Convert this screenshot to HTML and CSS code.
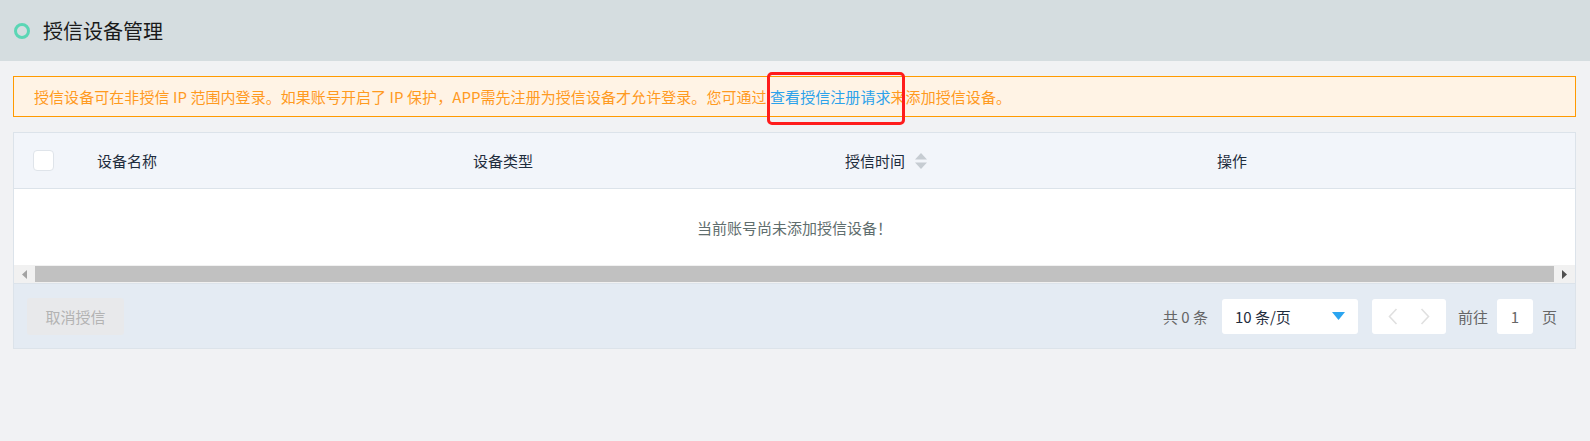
FILE: index.html
```html
<!DOCTYPE html>
<html lang="zh-CN">
<head>
<meta charset="utf-8">
<title>授信设备管理</title>
<link rel="stylesheet" href="styles.css">
</head>
<body>
<header class="page-head">
  <span class="head-dot"></span>
  <h1 class="head-title">授信设备管理</h1>
</header>
<main class="content">
  <div class="alert">
    <span>授信设备可在非授信 IP 范围内登录。如果账号开启了 IP 保护，APP需先注册为授信设备才允许登录。您可通过 <a class="alert-link">查看授信注册请求</a>来添加授信设备。</span>
    <span class="mark-box"></span>
  </div>

  <section class="table">
    <div class="thead">
      <div class="cell cell-check"><span class="checkbox"></span></div>
      <div class="cell">设备名称</div>
      <div class="cell">设备类型</div>
      <div class="cell">授信时间
        <svg class="sort" width="12" height="16" viewBox="0 0 12 16"><path d="M6 0 L12 6.5 L0 6.5 Z" fill="#c6ccd2"/><path d="M6 16 L12 9.5 L0 9.5 Z" fill="#c6ccd2"/></svg>
      </div>
      <div class="cell">操作</div>
    </div>
    <div class="tbody">当前账号尚未添加授信设备！</div>
    <div class="hscroll">
      <span class="hs-btn"><svg width="5" height="9" viewBox="0 0 5 9"><path d="M5 0 L0 4.5 L5 9 Z" fill="#a3a3a3"/></svg></span>
      <span class="hs-thumb"></span>
      <span class="hs-btn"><svg width="5" height="9" viewBox="0 0 5 9"><path d="M0 0 L5 4.5 L0 9 Z" fill="#505050"/></svg></span>
    </div>
    <div class="tfoot">
      <button class="btn-disabled" disabled>取消授信</button>
      <div class="pager">
        <span class="total">共 0 条</span>
        <div class="select">
          <span>10 条/页</span>
          <svg width="13" height="8" viewBox="0 0 13 8"><path d="M0 0 L13 0 L6.5 8 Z" fill="#2ba5f0"/></svg>
        </div>
        <div class="nav">
          <svg width="10" height="17" viewBox="0 0 10 17"><path d="M8.5 1 L1.5 8.5 L8.5 16" fill="none" stroke="#e0e0e0" stroke-width="1.6"/></svg>
          <svg width="10" height="17" viewBox="0 0 10 17"><path d="M1.5 1 L8.5 8.5 L1.5 16" fill="none" stroke="#e0e0e0" stroke-width="1.6"/></svg>
        </div>
        <span class="goto">前往</span>
        <span class="page-input">1</span>
        <span class="goto">页</span>
      </div>
    </div>
  </section>
</main>
</body>
</html>
```

FILE: styles.css
```css
* { box-sizing: border-box; }
html, body { margin: 0; padding: 0; }
body {
  background: #f1f2f4;
  font-family: "Noto Sans CJK SC", "Noto Sans", sans-serif;
  color: #1f2d3d;
  height: 441px;
  overflow: hidden;
}
.page-head {
  height: 61px;
  background: #d5dde0;
  display: flex;
  align-items: center;
  padding-left: 14px;
  gap: 13px;
}
.head-dot {
  width: 16px;
  height: 16px;
  border: 3.5px solid #5bd6b5;
  border-radius: 50%;
}
.head-title {
  margin: 0;
  font-size: 20px;
  font-weight: 400;
  line-height: 24px;
  color: #1a1a1a;
}
.content {
  padding: 15px 14px 0 13px;
}
.alert {
  position: relative;
  height: 41px;
  border: 1px solid #ff9a00;
  background: #fff3e5;
  color: #ff9a1f;
  font-size: 15px;
  line-height: 39px;
  padding-left: 20px;
  white-space: nowrap;
  letter-spacing: 0.06px;
}
.alert-link { color: #2ca2ea; }
.mark-box {
  position: absolute;
  left: 753px;
  top: -5px;
  width: 138px;
  height: 53px;
  border: 3px solid #ff1c1c;
  border-radius: 5px;
}
.table {
  margin-top: 15px;
  border: 1px solid #dce3ea;
  background: #fff;
}
.thead {
  display: grid;
  grid-template-columns: 69px 376px 372px 372px 1fr;
  height: 56px;
  background: #f2f5fa;
  border-bottom: 1px solid #dce3ea;
  font-size: 15px;
}
.cell {
  display: flex;
  align-items: center;
  padding-left: 14px;
  gap: 9px;
}
.cell-check { padding-left: 19px; }
.checkbox {
  width: 21px;
  height: 21px;
  background: #fff;
  border: 1px solid #dfe4ea;
  border-radius: 4px;
}
.sort { margin-left: 1px; }
.tbody {
  height: 76px;
  display: flex;
  align-items: center;
  justify-content: center;
  font-size: 15px;
  color: #5f6e6e;
  padding-top: 1px;
}
.hscroll {
  display: flex;
  height: 19px;
  background: #f1f1f1;
  border-bottom: 1px solid #dce3ea;
}
.hs-btn {
  width: 21px;
  display: flex;
  align-items: center;
  justify-content: center;
}
.hs-thumb {
  flex: 1;
  background: #c1c1c1;
  margin: 1px 0 1px 0;
}
.tfoot {
  height: 64px;
  background: #e4ebf3;
  display: flex;
  align-items: center;
  justify-content: space-between;
  padding: 0 18px 0 13px;
}
.btn-disabled {
  width: 97px;
  height: 37px;
  border: none;
  border-radius: 3px;
  background: #e8e9eb;
  color: #b3b3b3;
  font-family: inherit;
  font-size: 15px;
  padding: 0;
}
.pager {
  display: flex;
  align-items: center;
  font-size: 15px;
  color: #666;
}
.total { margin-right: 14px; }
.select {
  width: 136px;
  height: 35px;
  background: #fff;
  border-radius: 3px;
  display: flex;
  align-items: center;
  justify-content: space-between;
  padding: 0 13px 0 13px;
  color: #1f2d3d;
  margin-right: 14px;
}
.nav {
  width: 74px;
  height: 35px;
  background: #fff;
  border-radius: 3px;
  display: flex;
  align-items: center;
  justify-content: space-between;
  padding: 0 16px 0 16px;
  margin-right: 12px;
}
.page-input {
  width: 36px;
  height: 35px;
  background: #fff;
  border-radius: 3px;
  display: flex;
  align-items: center;
  justify-content: center;
  margin: 0 9px;
  color: #666;
}
```
